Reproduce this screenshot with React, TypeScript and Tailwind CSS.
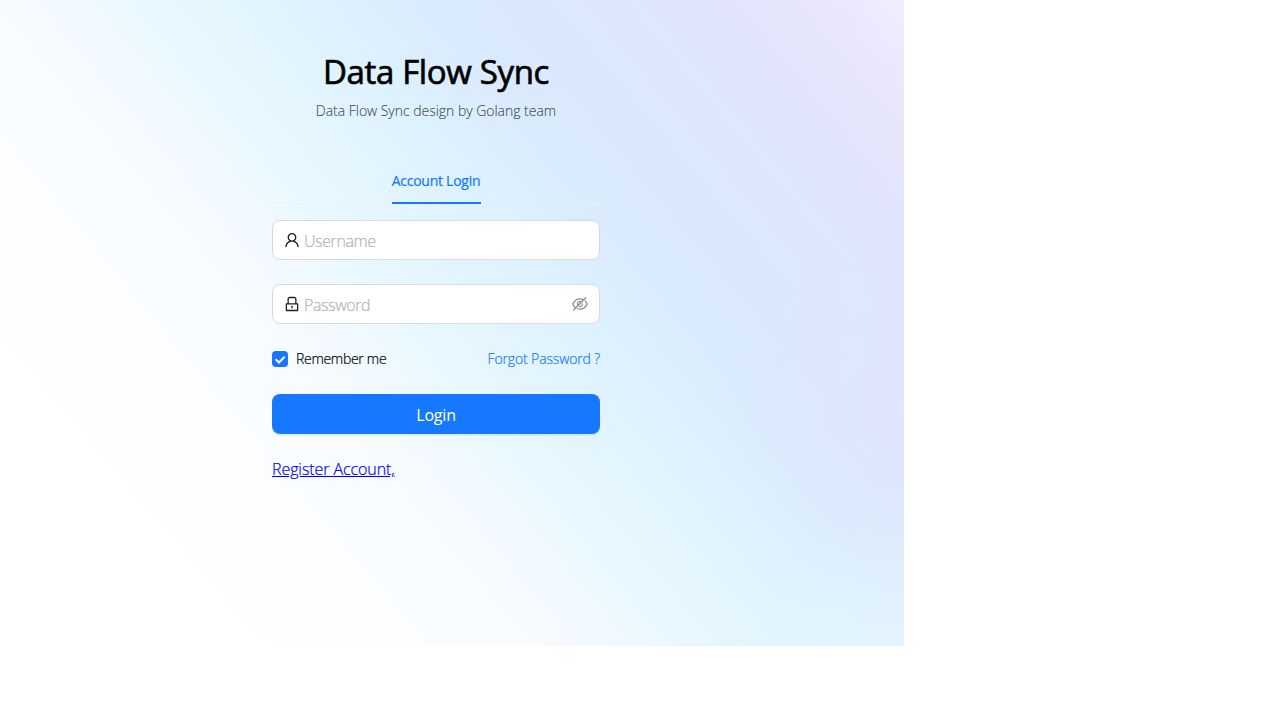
import { useState } from "react";
import { AiOutlineUser, AiOutlineLock, AiOutlineEyeInvisible } from "react-icons/ai";

const ICON_BOX = "64 64 896 896";

const fieldClass =
  "flex h-10 items-center rounded-lg border border-[#d9d9d9] bg-white px-[11px] text-[16px]";
const inputClass =
  "ml-1 min-w-0 flex-1 bg-transparent pt-px font-light tracking-[-0.4px] outline-none placeholder:text-[#b4b4b4]";

export default function App() {
  const [remember, setRemember] = useState(true);
  return (
    <div className="h-[720px] w-full overflow-hidden bg-white font-['Open_Sans',sans-serif] font-light text-black/88 [-webkit-text-stroke:0.2px_currentColor]">
      <main className="flex h-[646px] w-[904px] flex-col items-center bg-[radial-gradient(circle_at_100%_100%,rgba(240,250,255,0.4)_0px,rgba(240,250,255,0)_140px),radial-gradient(circle_at_100%_64%,rgba(226,228,252,0.6)_0px,rgba(226,228,252,0)_180px),linear-gradient(50deg,#ffffff_0%,#ffffff_15%,#fcfdff_24%,#f8fcff_36%,#f1f9ff_42%,#eaf8ff_46%,#e2f4fe_54%,#ddf2fe_59%,#daecfd_65%,#dae8fc_72%,#dde7fb_80%,#e0e4fb_87%,#e8e6fc_94%,#f0eefd_100%)] pr-8">
        <header className="flex flex-col items-center pt-[50px]">
          <h1 className="h-11 text-[33px] leading-[44px] font-normal tracking-[-0.36px] whitespace-nowrap text-black [-webkit-text-stroke:0.7px_currentColor]">
            Data Flow Sync
          </h1>
          <p className="mt-[5px] h-[22px] text-[14px] leading-[23px] tracking-[-0.03px] whitespace-nowrap text-black/65">
            Data Flow Sync design by Golang team
          </p>
        </header>
        <form className="mt-[39px] flex w-[328px] flex-col" onSubmit={(e) => e.preventDefault()}>
          <div className="flex h-11 justify-center border-b border-[#f0f0f0]/80">
            <button
              type="button"
              className="h-11 w-[89px] border-b-2 border-[#1677ff] text-[14px] leading-[22px] font-normal tracking-[-0.26px] whitespace-nowrap text-[#1677ff]"
            >
              Account Login
            </button>
          </div>
          <label className={`${fieldClass} mt-4`}>
            <AiOutlineUser viewBox={ICON_BOX} className="size-4 text-black/88" />
            <input className={inputClass} placeholder="Username" />
          </label>
          <label className={`${fieldClass} mt-6`}>
            <AiOutlineLock viewBox={ICON_BOX} className="size-4 text-black/88" />
            <input type="password" className={inputClass} placeholder="Password" />
            <AiOutlineEyeInvisible viewBox={ICON_BOX} className="size-4 text-black/45" />
          </label>
          <div className="mt-6 flex h-[22px] items-center justify-between text-[14px] leading-[22px]">
            <button type="button" onClick={() => setRemember(!remember)} className="flex items-center gap-2">
              <span className="flex size-4 items-center justify-center rounded bg-[#1677ff]">
                {remember && (
                  <svg viewBox="0 0 16 16" className="size-4" fill="none" stroke="white" strokeWidth="2">
                    <path d="M3.6 8.3 7 11.5 12.7 5.6" />
                  </svg>
                )}
              </span>
              <span className="tracking-[-0.3px] text-black">Remember me</span>
            </button>
            <a className="tracking-[-0.14px] text-[#1677ff]">Forgot Password ?</a>
          </div>
          <button
            type="submit"
            className="mt-6 h-10 rounded-lg bg-[#1677ff] pt-0.5 text-[16px] leading-6 font-normal tracking-[-0.2px] text-white shadow-[0_2px_0_rgba(5,145,255,0.1)] [-webkit-text-stroke:0px]"
          >
            Login
          </button>
          <a className="mt-[23px] self-start text-[16px] leading-6 tracking-[-0.08px] whitespace-nowrap text-[#0000ee] underline">
            Register Account,
          </a>
        </form>
      </main>
    </div>
  );
}
